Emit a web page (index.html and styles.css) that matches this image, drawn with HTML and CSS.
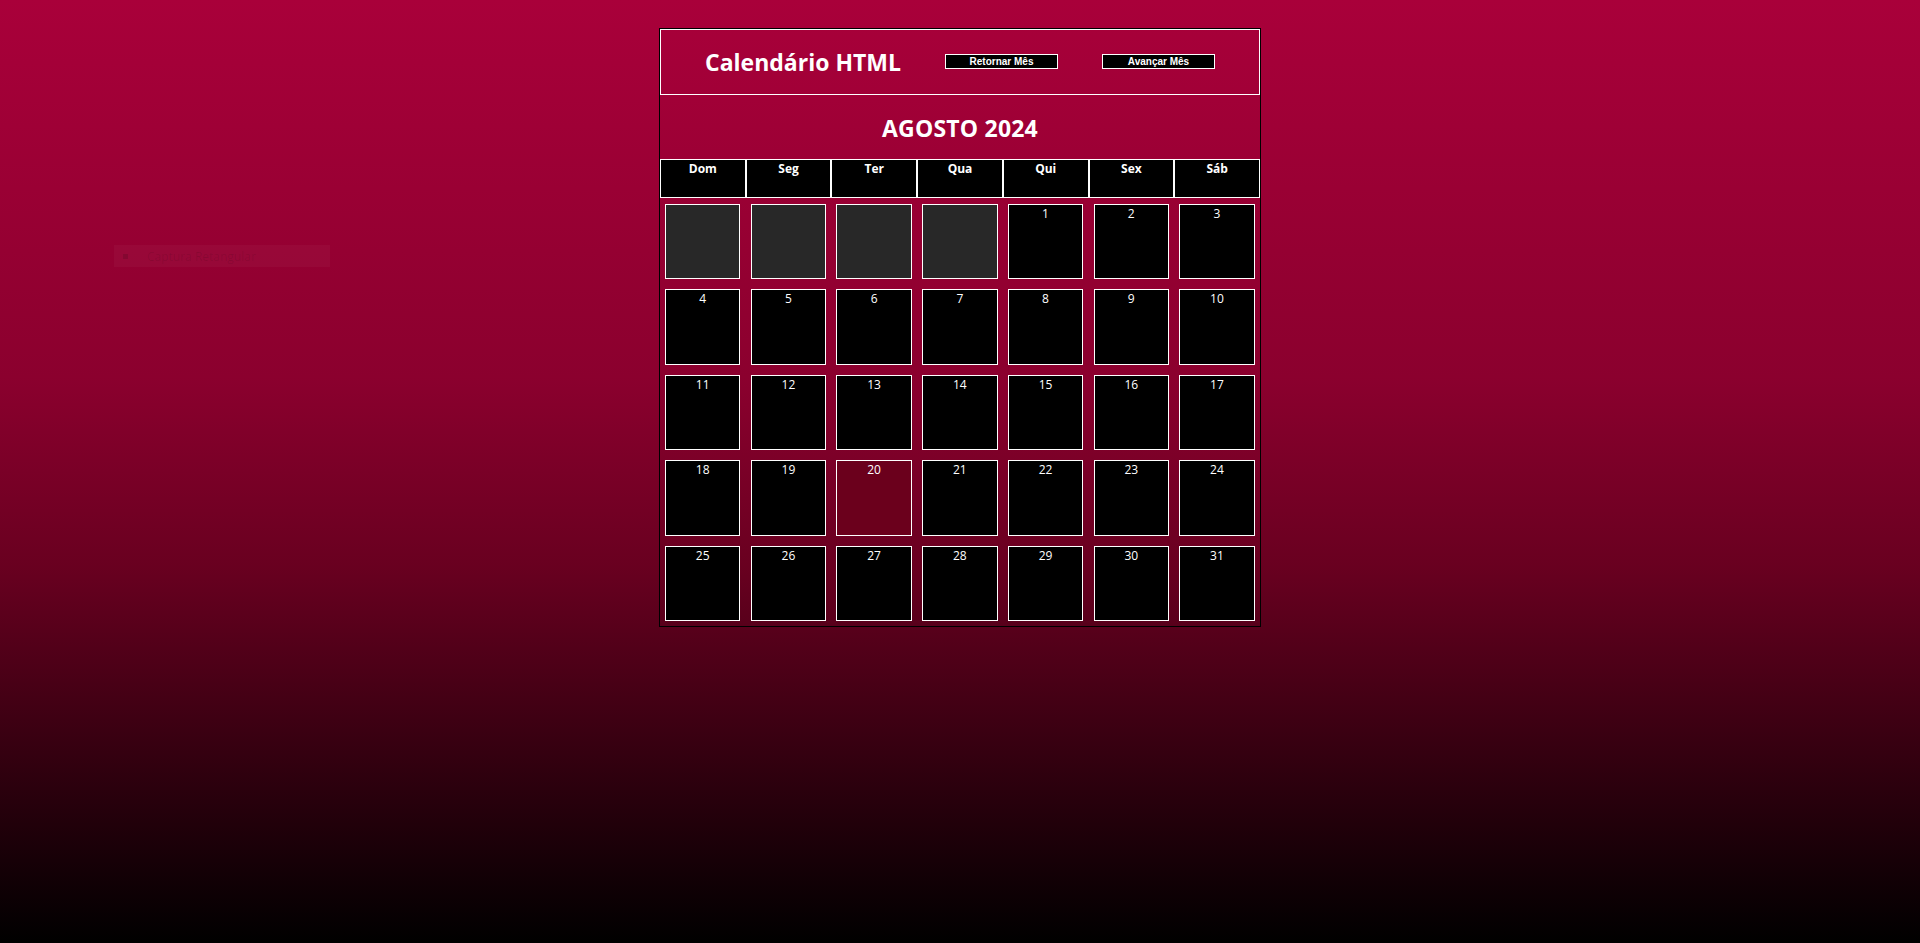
FILE: index.html
```html
<!DOCTYPE html>
<html lang="pt-BR">
<head>
<meta charset="utf-8">
<title>Calendário HTML</title>
<link rel="stylesheet" href="styles.css">
</head>
<body>
<div class="snip-hint"><span class="snip-icon"></span><span class="snip-text">Captura Retangular</span></div>
<main class="calendar">
  <header class="cal-header">
    <h1 class="cal-title">Calendário HTML</h1>
    <button class="nav-btn" type="button">Retornar Mês</button>
    <button class="nav-btn" type="button">Avançar Mês</button>
  </header>
  <h2 class="month">AGOSTO 2024</h2>
  <div class="weekdays">
    <div class="weekday">Dom</div>
    <div class="weekday">Seg</div>
    <div class="weekday">Ter</div>
    <div class="weekday">Qua</div>
    <div class="weekday">Qui</div>
    <div class="weekday">Sex</div>
    <div class="weekday">Sáb</div>
  </div>
  <div class="days">
    <div class="day empty"></div>
    <div class="day empty"></div>
    <div class="day empty"></div>
    <div class="day empty"></div>
    <div class="day">1</div>
    <div class="day">2</div>
    <div class="day">3</div>
    <div class="day">4</div>
    <div class="day">5</div>
    <div class="day">6</div>
    <div class="day">7</div>
    <div class="day">8</div>
    <div class="day">9</div>
    <div class="day">10</div>
    <div class="day">11</div>
    <div class="day">12</div>
    <div class="day">13</div>
    <div class="day">14</div>
    <div class="day">15</div>
    <div class="day">16</div>
    <div class="day">17</div>
    <div class="day">18</div>
    <div class="day">19</div>
    <div class="day today">20</div>
    <div class="day">21</div>
    <div class="day">22</div>
    <div class="day">23</div>
    <div class="day">24</div>
    <div class="day">25</div>
    <div class="day">26</div>
    <div class="day">27</div>
    <div class="day">28</div>
    <div class="day">29</div>
    <div class="day">30</div>
    <div class="day">31</div>
  </div>
</main>
</body>
</html>
```

FILE: styles.css
```css
html, body {
  margin: 0;
  padding: 0;
  height: 100%;
}

body {
  min-height: 943px;
  background: linear-gradient(to bottom, #a9003a 0%, #8b002e 40%, #690020 60%, #000000 100%);
  font-family: "Open Sans", "Noto Sans", sans-serif;
  color: #ffffff;
  padding-top: 28px;
  box-sizing: border-box;
}

.calendar {
  width: 600px;
  margin: 0 auto;
  border: 1px solid #000;
}

.cal-header {
  height: 66px;
  box-sizing: border-box;
  border: 1px solid #fff;
  display: flex;
  align-items: center;
  justify-content: space-evenly;
}

.cal-title {
  margin: 0;
  font-size: 23px;
  font-weight: 700;
  line-height: 1;
  padding-top: 1px;
}

.nav-btn {
  width: 113px;
  height: 15px;
  padding: 0;
  margin: 0 0 1px 0;
  border: 1px solid #fff;
  background: #000;
  color: #fff;
  font-family: "Liberation Sans", Arial, sans-serif;
  font-weight: 700;
  font-size: 10px;
  line-height: 13px;
  cursor: pointer;
}

.month {
  margin: 0;
  height: 64px;
  box-sizing: border-box;
  padding-top: 1px;
  display: flex;
  align-items: center;
  justify-content: center;
  font-size: 23px;
  font-weight: 700;
  letter-spacing: 0.2px;
}

.weekdays {
  display: grid;
  grid-template-columns: repeat(7, 1fr);
  background: #000;
}

.weekday {
  height: 39px;
  box-sizing: border-box;
  border: 1px solid #fff;
  text-align: center;
  font-size: 12px;
  font-weight: 700;
  line-height: 16px;
  padding-top: 1px;
}

.days {
  display: grid;
  grid-template-columns: repeat(7, 1fr);
  padding-top: 1px;
}

.day {
  height: 75.4px;
  box-sizing: border-box;
  margin: 5px 5.35px 5px 5px;
  border: 1px solid #fff;
  background: #000;
  text-align: center;
  font-size: 12px;
  line-height: 16px;
  padding-top: 1px;
}

.day.empty {
  background: #282828;
}

.day.today {
  background: #6b001c;
}

.snip-hint {
  position: absolute;
  left: 114px;
  top: 245px;
  width: 216px;
  height: 22px;
  background: rgba(255, 255, 255, 0.03);
  display: flex;
  align-items: center;
  font-family: "Open Sans", sans-serif;
  font-size: 12px;
  color: rgba(0, 0, 0, 0.09);
}

.snip-icon {
  width: 5px;
  height: 5px;
  margin-left: 9px;
  margin-right: 19px;
  background: rgba(0, 0, 0, 0.12);
}
```
